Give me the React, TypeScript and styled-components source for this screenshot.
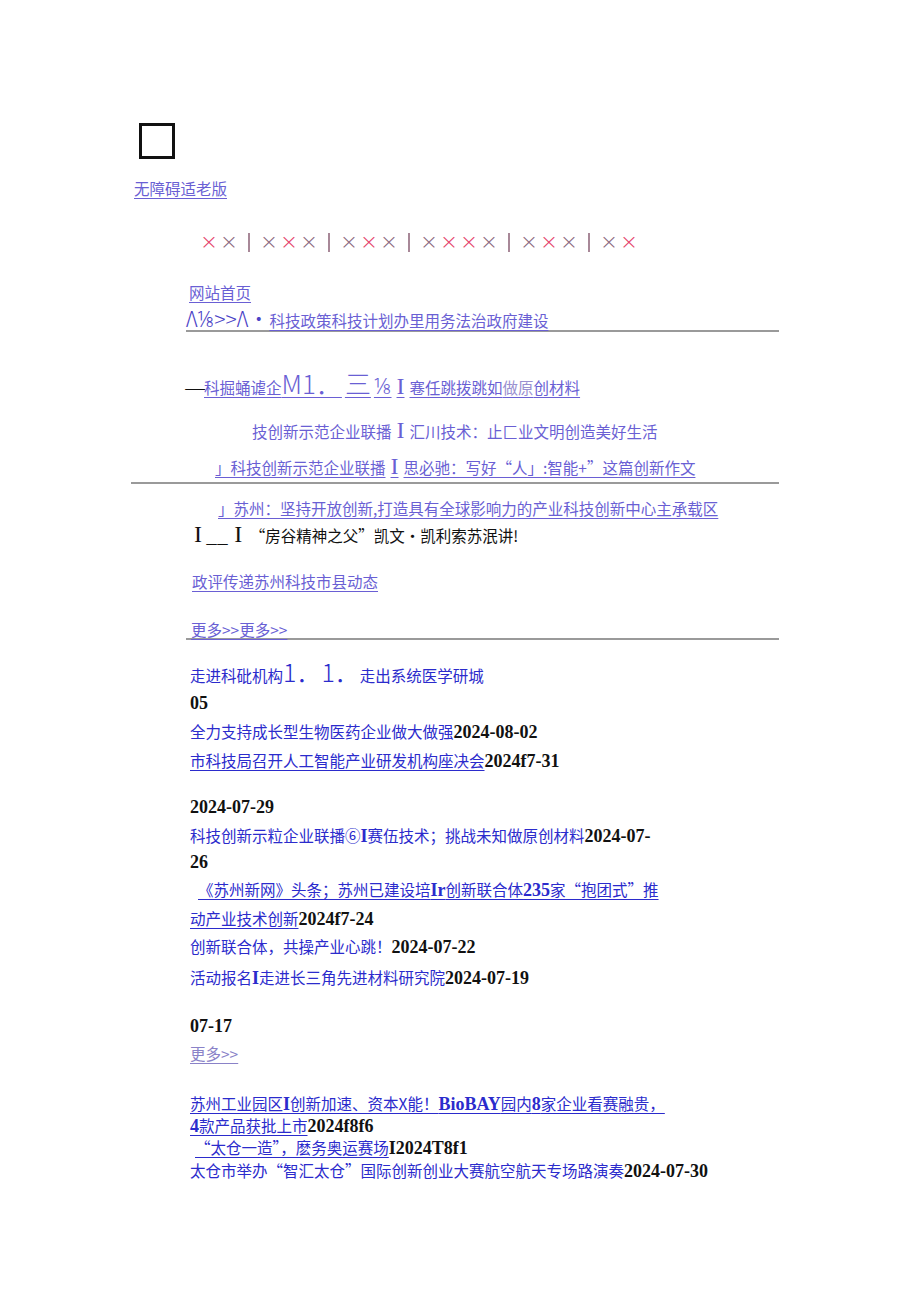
import styled, { createGlobalStyle, css } from 'styled-components'

const GlobalStyle = createGlobalStyle`
  body {
    margin: 0;
    background: #fff;
    font-family: "Noto Sans CJK SC", "Noto Sans", sans-serif;
  }
`

const tones = {
  lav: '#6a5fd4',
  blue: '#2b2bcc',
  dim: '#8a82c8',
  ink: '#4a42c6',
}

type Tone = keyof typeof tones

const Page = styled.div`
  width: 920px;
  min-height: 1301px;
  padding-top: 123px;
  box-sizing: border-box;
`

const CheckBox = styled.div`
  width: 36px;
  height: 36px;
  box-sizing: border-box;
  border: 3px solid #111;
  margin-left: 139px;
`

const Line = styled.div<{ $x: number; $mt: number }>`
  margin: ${(p) => p.$mt}px 0 0 ${(p) => p.$x}px;
  height: 20px;
  line-height: 20px;
  font-size: 15.5px;
  color: #111;
  white-space: nowrap;
`

const Link = styled.a<{ $tone?: Tone; $u?: boolean }>`
  color: ${(p) => tones[p.$tone ?? 'lav']};
  text-decoration: ${(p) => (p.$u ? 'underline' : 'none')};
  text-underline-offset: 3px;
  text-decoration-thickness: 1px;
`

const Glyph = styled.span<{ $size: number; $tone?: Tone; $serif?: boolean; $gap?: number }>`
  font-size: ${(p) => p.$size}px;
  line-height: 0;
  font-weight: 300;
  margin: 0 ${(p) => p.$gap ?? 0}px;
  color: ${(p) => (p.$tone ? tones[p.$tone] : 'inherit')};
  ${(p) =>
    p.$serif &&
    css`
      font-family: "Liberation Serif", serif;
      font-weight: 400;
    `}
`

const Dash = styled.span`
  display: inline-block;
  width: 18px;
  text-align: center;
  transform: scaleX(1.6);
`

const Soft = styled.span`
  color: #9a90d0;
`

const Bold = styled.span<{ $size?: number }>`
  font-family: "Liberation Serif", serif;
  font-weight: 700;
  font-size: ${(p) => p.$size ?? 18}px;
`

const Date = styled.span`
  font-family: "Liberation Serif", serif;
  font-weight: 700;
  font-size: 18px;
  color: #111;
`

const Rule = styled.div<{ $x: number; $mt: number }>`
  margin: ${(p) => p.$mt}px 0 0 ${(p) => p.$x}px;
  width: ${(p) => 779 - p.$x}px;
  border-top: 2px solid #9a9a9a;
`

const XRow = styled.div`
  display: flex;
  align-items: center;
  height: 20px;
  margin: 34px 0 0 199px;
`

const Mark = styled.span<{ $pink?: boolean }>`
  width: 20px;
  text-align: center;
  font-family: "DejaVu Sans", sans-serif;
  font-size: 22px;
  font-weight: 300;
  line-height: 20px;
  color: ${(p) => (p.$pink ? '#e5436c' : '#8c6a80')};
`

const Bar = styled.span`
  width: 20px;
  display: flex;
  justify-content: center;
  &::before {
    content: '';
    width: 1.5px;
    height: 19px;
    background: #a88898;
  }
`

const xGroups: boolean[][] = [
  [true, false],
  [false, true, false],
  [false, true, false],
  [false, true, true, false],
  [false, true, false],
  [false, true],
]

const MarksRow = () => (
  <XRow>
    {xGroups.map((g, gi) => (
      <span key={gi} style={{ display: 'contents' }}>
        {gi > 0 && <Bar />}
        {g.map((pink, i) => (
          <Mark key={i} $pink={pink}>
            ×
          </Mark>
        ))}
      </span>
    ))}
  </XRow>
)

export default function App() {
  return (
    <Page>
      <GlobalStyle />
      <CheckBox />
      <Line $x={134} $mt={19}>
        <Link $u>无障碍适老版</Link>
      </Line>
      <MarksRow />
      <Line $x={189} $mt={30}>
        <Link $u>网站首页</Link>
      </Line>
      <Line $x={186} $mt={8}>
        <Glyph $size={21} $tone="ink">Λ⅛&gt;&gt;Λ·</Glyph>
        <Link $u>科技政策科技计划办里用务法治政府建设</Link>
      </Line>
      <Rule $x={186} $mt={0} />

      <Line $x={186} $mt={45}>
        <Dash>—</Dash>
        <Link $u>
          科掘蛹谑企<Glyph $size={26}>M1．</Glyph>
          <Glyph $size={26} $gap={3}>三</Glyph>
          <Glyph $size={22}>⅛</Glyph>
          <Glyph $size={24} $serif $gap={5}>I</Glyph>寋任跳拨跳如<Soft>做原</Soft>创材料
        </Link>
      </Line>
      <Line $x={252} $mt={24}>
        <Link>
          技创新示范企业联播<Glyph $size={24} $serif $gap={5}>I</Glyph>汇川技术：止匚业文明创造美好生活
        </Link>
      </Line>
      <Line $x={215} $mt={16}>
        <Link $u>
          」科技创新示范企业联播<Glyph $size={24} $serif $gap={5}>I</Glyph>思必驰：写好“人」:智能+”这篇创新作文
        </Link>
      </Line>
      <Rule $x={131} $mt={5} />

      <Line $x={218} $mt={14}>
        <Link $u>」苏州：坚持开放创新,打造具有全球影响力的产业科技创新中心主承载区</Link>
      </Line>
      <Line $x={192} $mt={7}>
        <Glyph $size={24} $serif $gap={2}>I</Glyph>
        <Glyph $size={20} $gap={2}>__</Glyph>
        <Glyph $size={24} $serif $gap={4}>I</Glyph> “房谷精神之父”凯文•凯利索苏泯讲!
      </Line>
      <Line $x={192} $mt={26}>
        <Link $u>政评传递苏州科技市县动态</Link>
      </Line>
      <Line $x={191} $mt={28}>
        <Link $u>更多&gt;&gt;更多&gt;&gt;</Link>
      </Line>
      <Rule $x={186} $mt={-1} />

      <Line $x={190} $mt={25}>
        <Link $tone="blue">
          走进科砒机构<Glyph $size={25}>1．1．</Glyph>走出系统医学研城
        </Link>
      </Line>
      <Line $x={190} $mt={7}>
        <Date>05</Date>
      </Line>
      <Line $x={190} $mt={9}>
        <Link $tone="blue">全力支持成长型生物医药企业做大做强</Link>
        <Date>2024-08-02</Date>
      </Line>
      <Line $x={190} $mt={9}>
        <Link $tone="blue" $u>
          市科技局召开人工智能产业研发机构座决会
        </Link>
        <Date>2024f7-31</Date>
      </Line>
      <Line $x={190} $mt={26}>
        <Date>2024-07-29</Date>
      </Line>
      <Line $x={190} $mt={9}>
        <Link $tone="blue">
          科技创新示粒企业联播⑥<Bold>I</Bold>赛伍技术；挑战未知做原创材料
        </Link>
        <Date>2024-07-</Date>
      </Line>
      <Line $x={190} $mt={6}>
        <Date>26</Date>
      </Line>
      <Line $x={198} $mt={8}>
        <Link $tone="blue" $u>
          《苏州新网》头条；苏州已建设培<Bold>Ir</Bold>创新联合体<Bold>235</Bold>家“抱团式”推
        </Link>
      </Line>
      <Line $x={190} $mt={9}>
        <Link $tone="blue" $u>
          动产业技术创新
        </Link>
        <Date>2024f7-24</Date>
      </Line>
      <Line $x={190} $mt={8}>
        <Link $tone="blue">创新联合体，共操产业心跳！</Link>
        <Date>2024-07-22</Date>
      </Line>
      <Line $x={190} $mt={11}>
        <Link $tone="blue">
          活动报名<Bold>I</Bold>走进长三角先进材料研究院
        </Link>
        <Date>2024-07-19</Date>
      </Line>
      <Line $x={190} $mt={28}>
        <Date>07-17</Date>
      </Line>
      <Line $x={190} $mt={8}>
        <Link $tone="dim" $u>
          更多&gt;&gt;
        </Link>
      </Line>

      <Line $x={190} $mt={30}>
        <Link $tone="blue" $u>
          苏州工业园区<Bold>I</Bold>创新加速、资本X能！<Bold>BioBAY</Bold>园内<Bold>8</Bold>家企业看赛融贵，
        </Link>
      </Line>
      <Line $x={190} $mt={2}>
        <Link $tone="blue" $u>
          <Bold>4</Bold>款产品获批上市
        </Link>
        <Date>2024f8f6</Date>
      </Line>
      <Line $x={195} $mt={2}>
        <Link $tone="blue" $u>
          “太仓一造”，麽务奥运赛场
        </Link>
        <Date>I2024T8f1</Date>
      </Line>
      <Line $x={190} $mt={3}>
        <Link $tone="blue">太仓市举办“智汇太仓”国际创新创业大赛航空航天专场路演奏</Link>
        <Date>2024-07-30</Date>
      </Line>
    </Page>
  )
}
